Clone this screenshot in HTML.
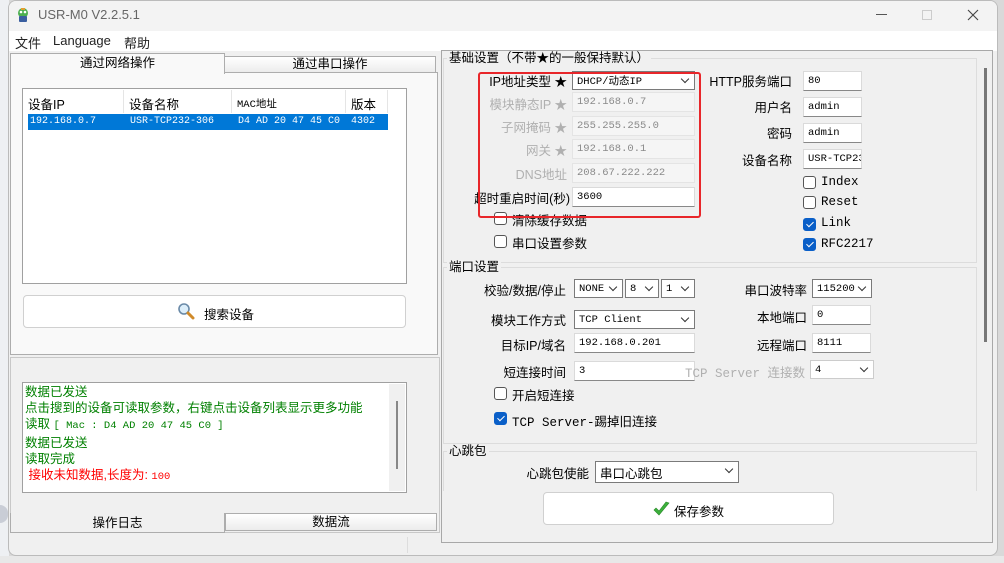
<!DOCTYPE html>
<html><head><meta charset="utf-8"><style>
*{box-sizing:border-box;margin:0;padding:0}
body{width:1004px;height:563px;overflow:hidden;background:#d9d9d9;position:relative;font-family:"Liberation Sans","Noto Sans CJK SC",sans-serif;font-size:12px;color:#000}
.a{position:absolute}
.m{font-family:"Liberation Mono","Noto Sans CJK SC",monospace;font-size:10.5px}
.inp{position:absolute;background:#fff;border:1px solid #dadada;border-bottom:1px solid #888;height:20px;display:flex;align-items:center;padding-left:4px;white-space:nowrap;overflow:hidden}
.dis{background:#f5f5f5;color:#8a8a8a;border-color:#e4e4e4}
.cb{position:absolute;background:#fff;border:1px solid #7a7a7a;height:19px;display:flex;align-items:center;padding-left:4px;white-space:nowrap}
.cb:after{content:"";position:absolute;right:6px;top:4px;width:5px;height:5px;border-right:1px solid #333;border-bottom:1px solid #333;transform:rotate(45deg)}
.lbl{position:absolute;text-align:right;white-space:nowrap;font-size:12.5px}
.gray{color:#b0b0b0}
.chk{position:absolute;width:13px;height:13px;border:1px solid #555;border-radius:3px;background:#fff}
.chk.on{background:#0a5fc8;border-color:#0a5fc8}
.chk.on:after{content:"";position:absolute;left:3.5px;top:1px;width:3px;height:6px;border-right:1.3px solid #fff;border-bottom:1.3px solid #fff;transform:rotate(45deg)}
.ct{position:absolute;white-space:nowrap;font-size:12.5px}
.grp{position:absolute;border:1px solid #dcdcdc;border-right-color:#ddd}
.gt{position:absolute;background:#f0f0f0;padding:0 2px;font-size:12.5px;line-height:14px}
</style></head><body>
<div class="a" style="left:0;top:0;width:9px;height:563px;background:#eef0f3"></div>
<div class="a" style="left:0;top:505px;width:8px;height:18px;background:#c9cdd6;border-radius:0 8px 8px 0"></div>
<div class="a" style="left:0;top:556px;width:1004px;height:7px;background:#e8e8e8"></div>

<div class="a" style="left:8px;top:0;width:990px;height:556px;background:#f0f0f0;border:1px solid #bbb;border-radius:8px;overflow:hidden">
 <div class="a" style="left:0;top:0;width:990px;height:30px;background:#f3f3f3"></div>
 <div class="a" style="left:0;top:30px;width:990px;height:20px;background:#fff"></div>
</div>
<svg class="a" style="left:15px;top:7px" width="16" height="16" viewBox="0 0 16 16"><circle cx="8" cy="6" r="5" fill="#4caf50"/><rect x="4" y="9" width="8" height="6" rx="1" fill="#3a5fa0"/><circle cx="6" cy="5" r="1.3" fill="#fff"/><circle cx="10" cy="5" r="1.3" fill="#fff"/><rect x="6" y="1" width="4" height="2" fill="#e0a030"/></svg>
<div class="a" style="left:38px;top:7px;font-size:13px;color:#666">USR-M0 V2.2.5.1</div>
<div class="a" style="left:876px;top:14px;width:11px;height:1px;background:#555"></div>
<div class="a" style="left:922px;top:10px;width:10px;height:10px;border:1px solid #ccc"></div>
<svg class="a" style="left:967px;top:9px" width="12" height="12" viewBox="0 0 12 12"><path d="M1 1L11 11M11 1L1 11" stroke="#444" stroke-width="1.1"/></svg>
<div class="a" style="left:15px;top:33px;font-size:13px;color:#222">文件</div>
<div class="a" style="left:53px;top:33px;font-size:13px;color:#222">Language</div>
<div class="a" style="left:124px;top:33px;font-size:13px;color:#222">帮助</div>

<div class="a" style="left:10px;top:72px;width:428px;height:283px;background:#f9f9f9;border:1px solid #adadad"></div>
<div class="a" style="left:10px;top:53px;width:215px;height:21px;background:#f9f9f9;border:1px solid #adadad;border-bottom:none;text-align:center;line-height:19px;font-size:12.5px">通过网络操作</div>
<div class="a" style="left:224px;top:56px;width:212px;height:17px;background:linear-gradient(#fff,#ececec);border:1px solid #adadad;text-align:center;line-height:15px;font-size:12.5px">通过串口操作</div>
<div class="a" style="left:22px;top:88px;width:385px;height:196px;background:#fff;border:1px solid #a0a0a0"></div>
<div class="a" style="left:28px;top:94px;font-size:12.5px">设备IP</div>
<div class="a" style="left:123px;top:90px;width:1px;height:23px;background:#e5e5e5"></div>
<div class="a" style="left:129px;top:94px;font-size:12.5px">设备名称</div>
<div class="a" style="left:231px;top:90px;width:1px;height:23px;background:#e5e5e5"></div>
<div class="a m" style="left:237px;top:96px">MAC地址</div>
<div class="a" style="left:345px;top:90px;width:1px;height:23px;background:#e5e5e5"></div>
<div class="a" style="left:351px;top:94px;font-size:12.5px">版本</div>
<div class="a" style="left:387px;top:90px;width:1px;height:23px;background:#e5e5e5"></div>
<div class="a m" style="left:28px;top:114px;width:360px;height:16px;background:#0078d7;color:#fff;line-height:16px;font-size:10px">
 <span class="a" style="left:2px">192.168.0.7</span><span class="a" style="left:102px">USR-TCP232-306</span><span class="a" style="left:210px">D4 AD 20 47 45 C0</span><span class="a" style="left:323px">4302</span></div>
<div class="a" style="left:23px;top:295px;width:383px;height:33px;background:#fff;border:1px solid #d0d0d0;border-radius:4px"></div>
<svg class="a" style="left:177px;top:302px" width="18" height="18" viewBox="0 0 18 18"><circle cx="7" cy="7" r="5" fill="#dceefa" stroke="#6a8aa8" stroke-width="1.6"/><path d="M11 11 L16 16" stroke="#d08a2a" stroke-width="3" stroke-linecap="round"/></svg>
<div class="a" style="left:204px;top:304px;font-size:12.5px">搜索设备</div>

<div class="a" style="left:10px;top:357px;width:430px;height:176px;background:#f0f0f0;border:1px solid #c8c8c8"></div>
<div class="a" style="left:22px;top:382px;width:385px;height:111px;background:#fff;border:1px solid #a0a0a0"></div>
<div class="a" style="left:389px;top:384px;width:16px;height:107px;background:#f0f0f0"></div>
<div class="a" style="left:396px;top:401px;width:2px;height:68px;background:#888"></div>
<div class="a" style="left:25px;top:384px;color:#008000;font-size:12.5px;line-height:16.2px;white-space:nowrap">数据已发送<br>点击搜到的设备可读取参数，右键点击设备列表显示更多功能<br>读取 <span class="m">[ Mac : D4 AD 20 47 45 C0 ]</span><br>数据已发送<br>读取完成<br><span style="color:#f00">&nbsp;接收未知数据,长度为: <span class="m">100</span></span></div>
<div class="a" style="left:10px;top:513px;width:215px;height:20px;background:#f0f0f0;border:1px solid #adadad;border-top:none;text-align:center;line-height:20px;font-size:12.5px">操作日志</div>
<div class="a" style="left:225px;top:513px;width:212px;height:18px;background:linear-gradient(#fff,#ececec);border:1px solid #adadad;text-align:center;line-height:16px;font-size:12.5px">数据流</div>
<div class="a" style="left:407px;top:537px;width:1px;height:16px;background:#ddd"></div>

<div class="a" style="left:441px;top:50px;width:552px;height:493px;border:1px solid #a8a8a8;background:#f0f0f0"></div>
<div class="a" style="left:984px;top:68px;width:3px;height:274px;background:#777"></div>
<div class="grp" style="left:443px;top:58px;width:534px;height:205px"></div>
<div class="gt" style="left:447px;top:51px">基础设置（不带★的一般保持默认）</div>

<div class="lbl" style="right:437px;top:71px">IP地址类型 ★</div>
<div class="cb m" style="left:572px;top:71px;width:123px">DHCP/动态IP</div>
<div class="lbl gray" style="right:437px;top:94px">模块静态IP ★</div>
<div class="inp dis m" style="left:572px;top:92px;width:123px">192.168.0.7</div>
<div class="lbl gray" style="right:437px;top:117px">子网掩码 ★</div>
<div class="inp dis m" style="left:572px;top:116px;width:123px">255.255.255.0</div>
<div class="lbl gray" style="right:437px;top:140px">网关 ★</div>
<div class="inp dis m" style="left:572px;top:139px;width:123px">192.168.0.1</div>
<div class="lbl gray" style="right:437px;top:164px">DNS地址</div>
<div class="inp dis m" style="left:572px;top:163px;width:123px">208.67.222.222</div>
<div class="lbl" style="right:434px;top:188px">超时重启时间(秒)</div>
<div class="inp m" style="left:572px;top:187px;width:123px">3600</div>
<div class="chk" style="left:494px;top:212px"></div><div class="ct" style="left:512px;top:210px">清除缓存数据</div>
<div class="chk" style="left:494px;top:235px"></div><div class="ct" style="left:512px;top:233px">串口设置参数</div>
<div class="a" style="left:478px;top:72px;width:223px;height:146px;border:2px solid #e8262a;border-radius:3px"></div>

<div class="lbl" style="right:212px;top:71px">HTTP服务端口</div>
<div class="inp m" style="left:803px;top:71px;width:59px">80</div>
<div class="lbl" style="right:212px;top:97px">用户名</div>
<div class="inp m" style="left:803px;top:97px;width:59px">admin</div>
<div class="lbl" style="right:212px;top:123px">密码</div>
<div class="inp m" style="left:803px;top:123px;width:59px">admin</div>
<div class="lbl" style="right:212px;top:150px">设备名称</div>
<div class="inp m" style="left:803px;top:149px;width:59px">USR-TCP23</div>
<div class="chk" style="left:803px;top:176px"></div><div class="ct m" style="left:821px;top:175px">Index</div>
<div class="chk" style="left:803px;top:196px"></div><div class="ct m" style="left:821px;top:195px">Reset</div>
<div class="chk on" style="left:803px;top:218px"></div><div class="ct m" style="left:821px;top:216px">Link</div>
<div class="chk on" style="left:803px;top:238px"></div><div class="ct m" style="left:821px;top:237px">RFC2217</div>

<div class="grp" style="left:443px;top:267px;width:534px;height:177px"></div>
<div class="gt" style="left:447px;top:260px">端口设置</div>
<div class="lbl" style="right:438px;top:280px">校验/数据/停止</div>
<div class="cb m" style="left:574px;top:279px;width:49px">NONE</div>
<div class="cb m" style="left:625px;top:279px;width:34px">8</div>
<div class="cb m" style="left:661px;top:279px;width:34px">1</div>
<div class="lbl" style="right:197px;top:280px">串口波特率</div>
<div class="cb m" style="left:812px;top:279px;width:60px">115200</div>
<div class="lbl" style="right:438px;top:310px">模块工作方式</div>
<div class="cb m" style="left:574px;top:310px;width:121px">TCP Client</div>
<div class="lbl" style="right:197px;top:307px">本地端口</div>
<div class="inp m" style="left:812px;top:305px;width:59px">0</div>
<div class="lbl" style="right:438px;top:335px">目标IP/域名</div>
<div class="inp m" style="left:574px;top:333px;width:121px">192.168.0.201</div>
<div class="lbl" style="right:197px;top:335px">远程端口</div>
<div class="inp m" style="left:812px;top:333px;width:59px">8111</div>
<div class="lbl" style="right:438px;top:362px">短连接时间</div>
<div class="inp m" style="left:574px;top:361px;width:121px">3</div>
<div class="lbl gray m" style="right:199px;top:362px">TCP Server <span style="font-family:'Noto Sans CJK SC',sans-serif;font-size:12.5px">连接数</span></div>
<div class="cb m" style="left:810px;top:360px;width:64px;border-color:#ccc">4</div>
<div class="chk" style="left:494px;top:387px"></div><div class="ct" style="left:512px;top:385px">开启短连接</div>
<div class="chk on" style="left:494px;top:412px"></div><div class="ct m" style="left:512px;top:411px">TCP Server-<span style="font-family:'Noto Sans CJK SC',sans-serif;font-size:12.5px">踢掉旧连接</span></div>

<div class="grp" style="left:443px;top:451px;width:534px;height:40px;border-bottom:none"></div>
<div class="gt" style="left:447px;top:444px">心跳包</div>
<div class="lbl" style="right:415px;top:463px">心跳包使能</div>
<div class="cb" style="left:595px;top:461px;width:144px;height:22px;font-size:12.5px">串口心跳包</div>
<div class="a" style="left:543px;top:492px;width:291px;height:33px;background:#fff;border:1px solid #d0d0d0;border-radius:4px"></div>
<svg class="a" style="left:653px;top:501px" width="17" height="16" viewBox="0 0 17 16"><path d="M1 9 L6 14 L16 2 L13 1 L6 10 L3 7 Z" fill="#3cb03c" stroke="#2a8a2a" stroke-width="0.6"/></svg>
<div class="a" style="left:674px;top:501px;font-size:12.5px">保存参数</div>
</body></html>
